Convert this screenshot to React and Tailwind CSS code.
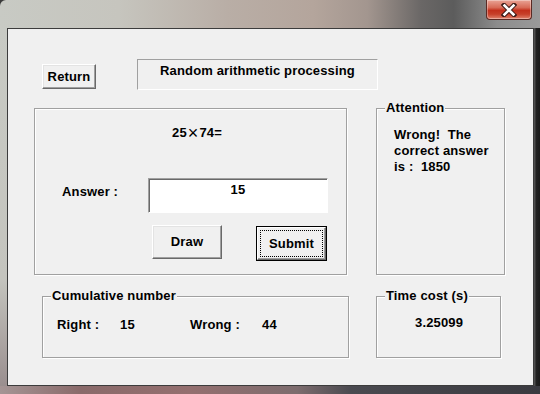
const font = "font-['Liberation_Sans',Arial,sans-serif] font-bold text-[13px] leading-[16px] tracking-[0.15px] text-black";

function RaisedButton({ children, className = "" }) {
  return (
    <div
      className={`flex items-center justify-center bg-[#f0f0f0] border border-t-white border-l-white border-r-[#696969] border-b-[#696969] shadow-[inset_-1px_-1px_0_#a0a0a0,inset_1px_1px_0_#e3e3e3] ${className}`}
    >
      {children}
    </div>
  );
}

function DefaultButton({ children, className = "" }) {
  return (
    <div className={`flex border border-black bg-[#f0f0f0] ${className}`}>
      <div className="flex flex-1 p-[2px] border border-t-white border-l-white border-r-[#696969] border-b-[#696969] shadow-[inset_-1px_-1px_0_#a0a0a0]">
        <div className="flex flex-1 items-center justify-center border border-dotted border-black">
          {children}
        </div>
      </div>
    </div>
  );
}

function Group({ caption, className = "", children }) {
  return (
    <div className={`relative border border-[#a0a0a0] shadow-[1px_1px_0_#ffffff,inset_1px_1px_0_#ffffff] ${className}`}>
      {caption && (
        <span className="absolute -top-[9px] left-[8px] bg-[#f0f0f0] px-[1px] whitespace-pre">
          {caption}
        </span>
      )}
      {children}
    </div>
  );
}

function CloseButton() {
  return (
    <div className="flex items-center justify-center w-[46px] h-[20px] mr-[8px] rounded-b-[4px] border border-t-0 border-[#5a2a24] bg-[linear-gradient(180deg,#e9a496_0%,#d76a56_40%,#c3301c_55%,#c7402a_75%,#e0836d_100%)] shadow-[inset_0_0_0_1px_rgba(255,255,255,0.35)]">
      <svg width="16" height="14" viewBox="0 0 16 14">
        <path d="M3 2 L13 12 M13 2 L3 12" stroke="#3a1a16" strokeWidth="4.5" strokeLinecap="square" />
        <path d="M3.5 2.5 L12.5 11.5 M12.5 2.5 L3.5 11.5" stroke="#ffffff" strokeWidth="2.6" strokeLinecap="square" />
      </svg>
    </div>
  );
}

export default function App() {
  return (
    <div className={`w-[540px] h-[394px] flex flex-col overflow-hidden bg-[#3a3a3a] ${font}`}>
      {/* title bar */}
      <div className="h-[28px] flex justify-end items-start rounded-tl-[6px] bg-[linear-gradient(90deg,#c8cac4_0%,#c6c5be_22%,#b9aea6_42%,#b4a59c_58%,#a3968f_68%,#6a6766_78%,#5c5c5c_84%,#8c8c8c_92%,#9a9a9a_100%)]">
        <CloseButton />
      </div>

      <div className="flex h-[358px]">
        <div className="w-[7px] bg-[linear-gradient(180deg,#c8cac4_0%,#c4c4be_70%,#9a8f8f_100%)]" />
        <div className="w-[527px] border border-[#3c3c3c] bg-[#f0f0f0] flex flex-col">
          {/* row 1 */}
          <div className="flex items-start pt-[30px]">
            <RaisedButton className="ml-[34px] mt-[5px] w-[54px] h-[25px]">Return</RaisedButton>
            <div className="ml-[41px] w-[241px] h-[31px] flex justify-center pt-[3px] border border-t-[#a0a0a0] border-l-[#a0a0a0] border-r-white border-b-white">
              Random arithmetic processing
            </div>
          </div>

          {/* row 2 */}
          <div className="flex items-start mt-[18px]">
            <Group className="ml-[26px] w-[313px] h-[167px] flex flex-col">
              <div className="ml-[137px] mt-[16px] flex items-center">
                <span>25</span>
                <span className="mx-[1px] font-normal text-[18px] leading-[16px]">×</span>
                <span>74=</span>
              </div>
              <div className="flex items-start mt-[37px]">
                <span className="ml-[27px] mt-[6px] w-[86px]">Answer :</span>
                <div className="w-[180px] h-[35px] bg-white flex justify-center pt-[3px] border border-t-[#a0a0a0] border-l-[#a0a0a0] border-r-white border-b-white shadow-[inset_1px_1px_0_#696969]">
                  15
                </div>
              </div>
              <div className="flex items-start mt-[12px]">
                <RaisedButton className="ml-[117px] w-[70px] h-[34px]">Draw</RaisedButton>
                <DefaultButton className="ml-[34px] mt-[1px] w-[71px] h-[35px]">Submit</DefaultButton>
              </div>
            </Group>

            <Group caption="Attention" className="ml-[29px] w-[129px] h-[167px]">
              <div className="pl-[17px] pt-[18px] whitespace-pre">
                {"Wrong!  The\ncorrect answer\nis :  1850"}
              </div>
            </Group>
          </div>

          {/* row 3 */}
          <div className="flex items-start mt-[21px]">
            <Group caption="Cumulative number" className="ml-[34px] w-[307px] h-[62px]">
              <div className="flex pl-[14px] pt-[20px]">
                <span className="w-[63px]">Right :</span>
                <span className="w-[70px]">15</span>
                <span className="w-[72px]">Wrong :</span>
                <span>44</span>
              </div>
            </Group>
            <Group caption="Time cost (s)" className="ml-[27px] w-[125px] h-[62px]">
              <div className="pl-[38px] pt-[18px]">3.25099</div>
            </Group>
          </div>
        </div>
        <div className="w-[6px] bg-[linear-gradient(90deg,#5a5a5a_0%,#222222_40%,#1a1a1a_100%)]" />
      </div>

      <div className="h-[8px] bg-[linear-gradient(90deg,#a59595_0%,#8a6a6a_15%,#946f6f_35%,#7d6c6e_55%,#4a4a50_65%,#3a3a40_100%)]" />
    </div>
  );
}
